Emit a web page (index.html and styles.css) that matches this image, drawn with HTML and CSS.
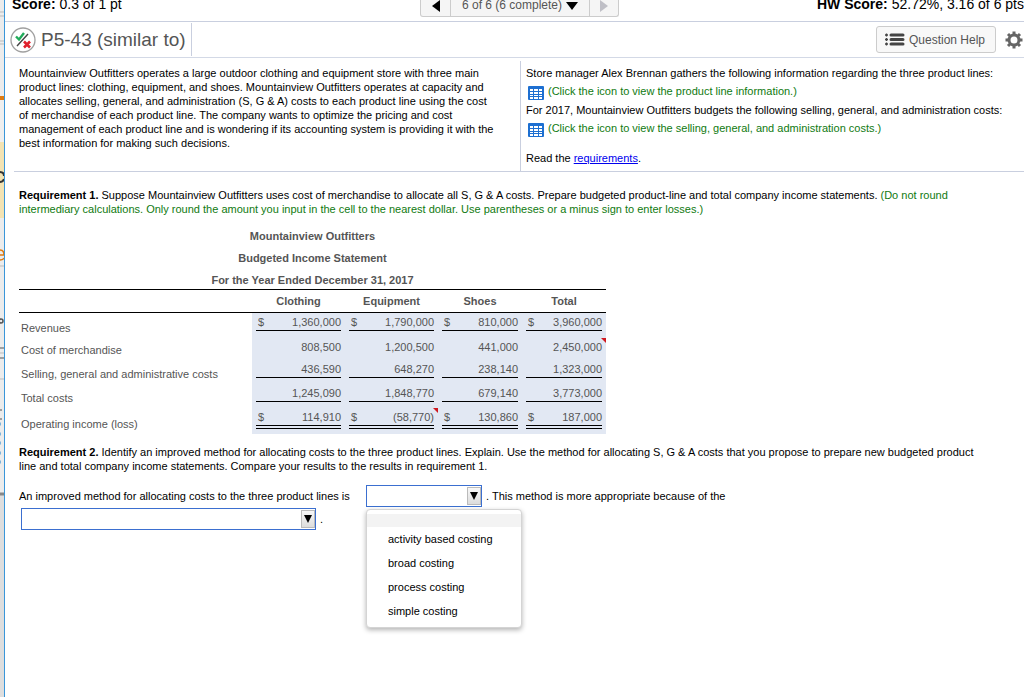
FILE: index.html
```html
<!DOCTYPE html>
<html lang="en">
<head>
<meta charset="utf-8">
<meta name="viewport" content="width=device-width, initial-scale=1">
<title>P5-43 (similar to)</title>
<link rel="stylesheet" href="styles.css">
</head>
<body>
<svg class="sprites" aria-hidden="true">
  <symbol id="grid-icon" viewBox="0 0 16 14">
    <rect width="16" height="14" rx="1" fill="#1d6fd1"/>
    <path fill="#fff" d="M2 3h3v2H2zM6 3h4v2H6zM11 3h3v2h-3zM2 6h3v2H2zM6 6h4v2H6zM11 6h3v2h-3zM2 9h3v1H2zM6 9h4v1H6zM11 9h3v1h-3zM2 11h3v2H2zM6 11h4v2H6zM11 11h3v2h-3z"/>
  </symbol>
</svg>
<div class="page">
  <div class="backdrop" aria-hidden="true">
    <svg width="4" height="500" viewBox="0 0 4 500">
      <path d="M0 12h4M0 16h4M0 41h4M0 44h4M0 266h4M0 353h4M0 379h4" stroke="#bbb"/>
      <path d="M0 172q4 0 4 4M0 182q3 0 4-3" fill="none" stroke="#333" stroke-width="2"/>
      <path d="M0 250q4 0 4 5H0M0 260q3 0 4-2" fill="none" stroke="#e07b10" stroke-width="1.500"/>
      <circle cx="1" cy="321" r="2" fill="none" stroke="#555" stroke-width="1.500"/>
      <path d="M0 348h4M0 358h4M0 410h2M0 419h2" stroke="#555"/>
      <path d="M0 424h1M0 434h1M0 443h1M0 453h1M0 462h1" stroke="#7eb4da" stroke-width="3"/>
    </svg>
  </div>
  <div class="dialog">
    <header class="scorebar">
      <p class="score"><b>Score:</b> 0.3 of 1 pt</p>
      <nav class="pager" aria-label="Questions">
        <button class="prev" aria-label="Previous"><svg width="8" height="12" viewBox="0 0 8 12"><path d="M8 0v12L0 6z" fill="#000"/></svg></button>
        <button class="current">6 of 6 (6 complete) <svg width="12" height="8" viewBox="0 0 12 8"><path d="M0 0h12L6 8z" fill="#000"/></svg></button>
        <button class="next" aria-label="Next" disabled><svg width="8" height="12" viewBox="0 0 8 12"><path d="M0 0v12l8-6z" fill="#bfbfc6"/></svg></button>
      </nav>
      <p class="score hw"><b>HW Score:</b> 52.72%, 3.16 of 6 pts</p>
    </header>

    <div class="titlebar">
      <svg class="status" viewBox="0 0 26 26" aria-hidden="true">
        <circle cx="13" cy="13" r="12" fill="#fff" stroke="#a0a0a0" stroke-width="1.300"/>
        <path d="M7 19L18 7" stroke="#444" stroke-width="1.400"/>
        <path d="M6 9.500l3 3 5-6.500" fill="none" stroke="#20ab5a" stroke-width="2.400"/>
        <path d="M14 14.500l6 6M20 14.500l-6 6" stroke="#e0202c" stroke-width="2.600"/>
      </svg>
      <h1>P5-43 (similar to)</h1>
      <button class="help">
        <svg width="20" height="13" viewBox="0 0 20 13"><path d="M6 2h12M6 6.500h12M6 11h12" stroke="#444" stroke-width="3" stroke-linecap="round"/><path d="M0 2h3M0 6.500h3M0 11h3M1.500 .5v3M1.500 5v3M1.500 9.500v3" stroke="#444" stroke-width="1.300"/></svg>
        Question Help
      </button>
      <button class="gear" aria-label="Settings">
        <svg width="18" height="18" viewBox="0 0 18 18"><circle cx="9" cy="9" r="5" fill="none" stroke="#666" stroke-width="3"/><path d="M9 .5v3M9 14.500v3M.5 9h3M14.500 9h3M3 3l2 2M13 13l2 2M15 3l-2 2M5 13l-2 2" stroke="#666" stroke-width="3"/></svg>
      </button>
    </div>

    <section class="problem">
      <p class="story">Mountainview Outfitters operates a large outdoor clothing and equipment store with three main product lines: clothing, equipment, and shoes. Mountainview Outfitters operates at capacity and allocates selling, general, and administration (S, G &amp; A) costs to each product line using the cost of merchandise of each product line. The company wants to optimize the pricing and cost management of each product line and is wondering if its accounting system is providing it with the best information for making such decisions.</p>
      <div class="facts">
        <p>Store manager Alex Brennan gathers the following information regarding the three product lines:</p>
        <p class="hint"><svg><use href="#grid-icon"/></svg>(Click the icon to view the product line information.)</p>
        <p>For 2017, Mountainview Outfitters budgets the following selling, general, and administration costs:</p>
        <p class="hint"><svg><use href="#grid-icon"/></svg>(Click the icon to view the selling, general, and administration costs.)</p>
        <p class="read">Read the <a href="#requirements">requirements</a>.</p>
      </div>
    </section>

    <main class="work">
      <p id="requirements"><b>Requirement 1.</b> Suppose Mountainview Outfitters uses cost of merchandise to allocate all S, G &amp; A costs. Prepare budgeted product-line and total company income statements. <span class="note">(Do not round intermediary calculations. Only round the amount you input in the cell to the nearest dollar. Use parentheses or a minus sign to enter losses.)</span></p>

      <table class="statement">
        <caption>Mountainview Outfitters<br>Budgeted Income Statement<br>For the Year Ended December 31, 2017</caption>
        <colgroup><col class="c-label"><col class="c-wide"><col class="c-wide"><col><col></colgroup>
        <thead>
          <tr><td></td><th scope="col">Clothing</th><th scope="col">Equipment</th><th scope="col">Shoes</th><th scope="col">Total</th></tr>
        </thead>
        <tbody>
          <tr class="ruled first"><th scope="row">Revenues</th><td><div class="amt"><i>$</i>1,360,000</div></td><td><div class="amt"><i>$</i>1,790,000</div></td><td><div class="amt"><i>$</i>810,000</div></td><td><div class="amt"><i>$</i>3,960,000</div></td></tr>
          <tr class="short"><th scope="row">Cost of merchandise</th><td><div class="amt">808,500</div></td><td><div class="amt">1,200,500</div></td><td><div class="amt">441,000</div></td><td class="flag"><div class="amt">2,450,000</div></td></tr>
          <tr class="ruled"><th scope="row">Selling, general and administrative costs</th><td><div class="amt">436,590</div></td><td><div class="amt">648,270</div></td><td><div class="amt">238,140</div></td><td><div class="amt">1,323,000</div></td></tr>
          <tr class="ruled"><th scope="row">Total costs</th><td><div class="amt">1,245,090</div></td><td><div class="amt">1,848,770</div></td><td><div class="amt">679,140</div></td><td><div class="amt">3,773,000</div></td></tr>
          <tr class="total"><th scope="row">Operating income (loss)</th><td><div class="amt"><i>$</i>114,910</div></td><td class="flag"><div class="amt"><i>$</i>(58,770)</div></td><td><div class="amt"><i>$</i>130,860</div></td><td><div class="amt"><i>$</i>187,000</div></td></tr>
        </tbody>
      </table>

      <p><b>Requirement 2.</b> Identify an improved method for allocating costs to the three product lines. Explain. Use the method for allocating S, G &amp; A costs that you propose to prepare new budgeted product line and total company income statements. Compare your results to the results in requirement 1.</p>

      <div class="answer">
        <label class="lead" for="method">An improved method for allocating costs to the three product lines is</label>
        <span class="pick method">
          <select id="method"><option></option><option>activity based costing</option><option>broad costing</option><option>process costing</option><option>simple costing</option></select>
          <span class="arrow"><svg width="8" height="8" viewBox="0 0 8 8"><path d="M0 0h8L4 8z"/></svg></span>
          <ul class="menu">
            <li class="blank"></li>
            <li>activity based costing</li>
            <li>broad costing</li>
            <li>process costing</li>
            <li>simple costing</li>
          </ul>
        </span>
        <label for="reason">. This method is more appropriate because of the</label>
      </div>
      <div class="answer second">
        <span class="pick reason">
          <select id="reason"><option></option></select>
          <span class="arrow"><svg width="8" height="8" viewBox="0 0 8 8"><path d="M0 0h8L4 8z"/></svg></span>
        </span>
        <span>.</span>
      </div>
    </main>
  </div>
</div>
</body>
</html>
```
FILE: styles.css
```css
* { box-sizing: border-box; }
body { margin: 0; background: #fff; color: #000; font: 11px/14px "Liberation Sans", Arial, sans-serif; }
p, h1, ul { margin: 0; padding: 0; }
button { font: inherit; cursor: pointer; }
.sprites { position: absolute; width: 0; height: 0; }

.page { display: flex; min-height: 100vh; overflow: hidden; }
.backdrop {
  flex: none; width: 4px;
  background: linear-gradient(#ececec 0 96px, #e07b10 96px 100px, #efefef 100px 142px, #f3e3b3 142px 218px, #ececec 218px 492px, #888 493px 495px, #dedede 496px);
}
.backdrop svg { display: block; }
.dialog { flex: 1; min-width: 0; border-left: 1px solid #3a96d9; }

.scorebar { display: flex; justify-content: space-between; height: 22px; overflow: hidden; border-bottom: 1px solid #c9cfdf; }
.score { flex: 1; padding-left: 7px; font-size: 14px; line-height: 8px; white-space: nowrap; }
.hw { text-align: right; }
.pager { display: flex; height: 17px; margin-left: 10px; border: solid #ccc; border-width: 0 1px 1px; border-radius: 0 0 3px 3px; background: #f5f5f5; }
.pager button { border: 0; padding: 0; background: none; font-size: 12px; line-height: 10px; color: #555; display: flex; align-items: flex-start; justify-content: center; white-space: nowrap; }
.pager .prev { width: 29px; }
.pager .current { width: 140px; border: solid #ccc; border-width: 0 1px; gap: 4px; }
.pager .next { width: 28px; }
.pager svg { flex: none; }
.pager .current svg { margin-top: 2px; }

.titlebar { display: flex; align-items: center; height: 36px; padding: 0 0 0 5px; border-bottom: 1px solid #d3d9e6; }
.status { flex: none; width: 26px; height: 26px; }
h1 { height: 33px; padding: 0 5px; border-right: 1px solid #c9cfdf; color: #555; font-size: 19px; font-weight: 400; line-height: 33px; white-space: nowrap; }
.help { display: flex; align-items: center; gap: 4px; height: 27px; margin-left: auto; padding: 0 10px 0 8px; border: 1px solid #ccc; border-radius: 3px; background: #f8f8f8; color: #555; font-size: 12px; white-space: nowrap; }
.gear { display: flex; margin: 0 1px 0 9px; padding: 0; border: 0; background: none; }

.problem { display: grid; grid-template-columns: minmax(0, 507fr) minmax(0, 503fr); margin-left: 9px; padding-top: 3px; border-bottom: 1px solid #c9cfdf; }
.story { padding: 5px 22px 20px 5px; border-right: 1px solid #c9cfdf; }
.facts { padding: 5px 0 6px 5px; }
.facts .hint { display: flex; align-items: center; gap: 4px; height: 23px; padding: 0 0 2px 2px; color: #107a10; }
.hint svg { width: 16px; height: 14px; margin-top: 4px; }
.facts .read { margin-top: 11px; }
a { color: #00e; }

.work { padding: 16px 40px 0 14px; }
.note { color: #107a10; }
.statement { width: 587px; margin: 9px 0 11px; border-spacing: 0; table-layout: fixed; color: #555; }
caption { margin-bottom: -2px; font-weight: 700; line-height: 22px; }
.c-label { width: 233px; }
.c-wide { width: 93px; }
.statement td, .statement th { padding: 0; }
thead td, thead th { height: 24px; border: solid #000; border-width: 1px 0; }
tbody tr { height: 24px; }
tbody .first { height: 25px; }
tbody .short { height: 22px; }
tbody .total { height: 26px; }
.statement tbody th { padding: 0 0 3px 2px; font-weight: 400; text-align: left; vertical-align: bottom; }
.statement tbody td { position: relative; padding: 2px 4px 0; background: #e2e8f3; vertical-align: top; }
.amt { display: flex; justify-content: flex-end; height: 16px; }
.amt i { margin: 0 auto 0 2px; font-style: normal; }
.ruled .amt { border-bottom: 1px solid #000; }
.total .amt { height: 19px; border-bottom: 4px double #000; }
.flag::after { content: ""; position: absolute; top: 0; right: 0; width: 5px; height: 5px; background: #d01820; clip-path: polygon(0 0, 100% 0, 100% 100%); }

.answer { display: flex; align-items: center; gap: 4px; height: 22px; margin-top: 12px; white-space: nowrap; }
.lead { min-width: 343px; }
.second { margin: 1px 0 0 2px; }
.pick { position: relative; display: flex; height: 22px; border: 1px solid #3b6fd0; }
.method { width: 116px; }
.reason { width: 295px; }
.pick select { flex: 1; width: 100%; appearance: none; border: 0; background: #fff; font: inherit; }
.arrow { position: absolute; top: 1px; right: 0; bottom: 1px; width: 14px; display: flex; align-items: flex-start; justify-content: center; padding-top: 4px; border: 1px solid #bbb; background: linear-gradient(#f8f8f8, #dcdcdc); pointer-events: none; }
.menu { position: absolute; z-index: 2; top: 23px; left: -1px; width: 156px; padding: 4px 0; border: 1px solid #d4d4d4; border-radius: 4px; background: #fff; box-shadow: 0 2px 5px rgba(0, 0, 0, .3); list-style: none; }
.menu li { padding-left: 21px; line-height: 24px; }
.menu .blank { height: 13px; background: #f3f3f3; }
```
